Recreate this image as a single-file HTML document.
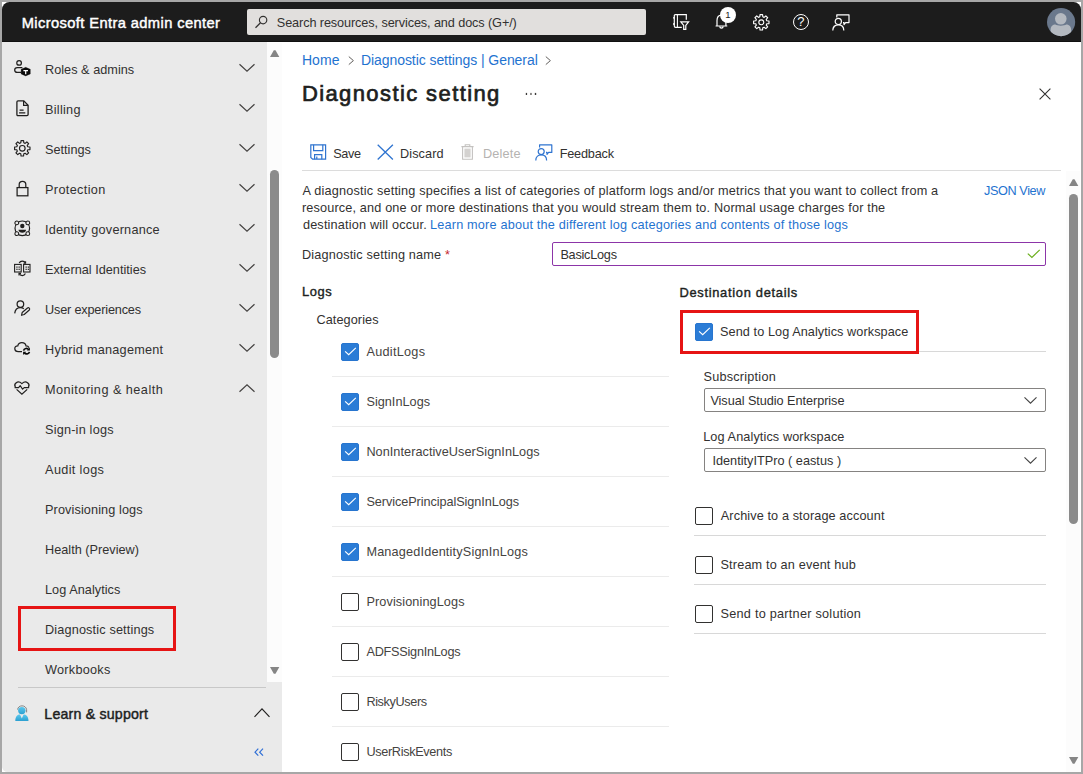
<!DOCTYPE html>
<html lang="en">
<head>
<meta charset="utf-8">
<title>Diagnostic setting - Microsoft Entra admin center</title>
<style>
html,body{margin:0;padding:0}
body{width:1083px;height:774px;overflow:hidden;background:#a7a7a7;font-family:"Liberation Sans",sans-serif;position:relative;color:#323130}
a{text-decoration:none}
ul,li,h1,h2,p{margin:0;padding:0;list-style:none;font-weight:normal;font-size:inherit}
#frame{position:absolute;left:2px;top:2px;width:1079px;height:770px;background:#fff}
#top{position:absolute;left:2px;top:2px;width:1079px;height:40px;box-sizing:border-box;background:#1c1c1c;border-bottom:1px solid #101010;border-radius:7.5px 7.5px 0 0}
#search{position:absolute;left:246.5px;top:9px;width:399.5px;height:26px;background:#e1dfdd;border-radius:2px}
#nav{position:absolute;left:2px;top:42px;width:265px;height:730px;background:#eaeaea;border-radius:0 0 0 6px}
#navfoot{position:absolute;left:2px;top:682px;width:280px;height:90px;background:#eaeaea;border-radius:0 0 0 6px}
#navscroll{position:absolute;left:267px;top:43px;width:15px;height:639px;background:#fcfcfc}
#navsep{position:absolute;left:18px;top:687px;width:248px;height:1px;background:#c8c8c8}
.thumb{position:absolute;background:#8b8b8b;border-radius:4.5px}
.t{position:absolute;white-space:pre;margin:0}
.ic{position:absolute;overflow:visible}
.hl{position:absolute;height:1px;background:#ebebeb}
.red{position:absolute;border:3px solid #e61414;box-sizing:border-box}
.cb{position:absolute;width:18px;height:18px;box-sizing:border-box;border-radius:2px}
.cb.on{background:#2b7cd6;border:1px solid #2775cf}
.cb.off{border:1px solid #323130;background:#fff}
.cb svg{position:absolute;left:-1px;top:-1px}
#name{position:absolute;left:552px;top:242px;width:494px;height:24px;box-sizing:border-box;border:1px solid #8c35a8;border-radius:2px;background:#fff}
.dd{position:absolute;left:704px;width:342px;height:24px;box-sizing:border-box;border:1px solid #858381;border-radius:2px;background:#fff}
#mainscroll{position:absolute;left:1066px;top:171px;width:14px;height:601px;background:#fcfcfc}
</style>
</head>
<body>
<div id="frame"></div>
<header><div id="top"></div>
<div class="t" style="left:21.7px;top:13.0px;font-size:14.7px;line-height:21px;letter-spacing:0.389px;color:#ffffff;-webkit-text-stroke:0.45px #ffffff;">Microsoft Entra admin center</div>
<div id="search"></div><svg class="ic" style="left:255px;top:16px" width="14" height="14" viewBox="0 0 14 14"><circle cx="8.1" cy="4.1" r="3.7" fill="none" stroke="#323130" stroke-width="1.15"/><path d="M5.5 6.8 L0.5 11.8" stroke="#323130" stroke-width="1.25" fill="none"/></svg><div class="t" style="left:276.8px;top:14.0px;font-size:12.7px;line-height:18px;letter-spacing:-0.105px;color:#323130;">Search resources, services, and docs (G+/)</div>
<svg class="ic" style="left:673px;top:13px" width="17" height="18" viewBox="0 0 17 18"><path d="M13.3 6.8 V1.6 H2.6 C1.6 1.6 1.3 2 1.3 3 V13 C1.3 14 1.6 14.4 2.6 14.4 H8.8" fill="none" stroke="#ffffff" stroke-width="1.2"/><path d="M4.4 1.6 V14.4" stroke="#ffffff" stroke-width="1.1"/><path d="M0 4.8 H1.8 M0 11 H1.8" stroke="#ffffff" stroke-width="1.3"/><path d="M7.8 8.8 H15.6 L12.8 12.4 V16.4 H10.7 V12.4 Z" fill="none" stroke="#ffffff" stroke-width="1.2" stroke-linejoin="miter"/></svg><svg class="ic" style="left:714.6px;top:14.2px" width="13" height="15" viewBox="0 0 13 15"><path d="M0.6 12 H12.3 M2 11.8 V6.6 C2 3 4.2 1.2 6.45 1.2 C8.7 1.2 10.9 3 10.9 6.6 V11.8" fill="none" stroke="#ffffff" stroke-width="1.2"/><path d="M4.7 12.4 C4.9 14.6 8 14.6 8.2 12.4" fill="none" stroke="#ffffff" stroke-width="1.2"/></svg><span style="position:absolute;left:720px;top:7px;width:16px;height:16px;border-radius:8px;background:#fff;color:#1b1a19;font-size:9.5px;line-height:15.5px;text-align:center">1</span><svg class="ic" style="left:752.7px;top:13.7px" width="16.6" height="16.6" viewBox="0 0 16.6 16.6"><path d="M13.80 6.80 L15.99 7.02 L15.99 9.58 L13.80 9.80 L13.25 11.12 L14.65 12.84 L12.84 14.65 L11.12 13.25 L9.80 13.80 L9.58 15.99 L7.02 15.99 L6.80 13.80 L5.48 13.25 L3.76 14.65 L1.95 12.84 L3.35 11.12 L2.80 9.80 L0.61 9.58 L0.61 7.02 L2.80 6.80 L3.35 5.48 L1.95 3.76 L3.76 1.95 L5.48 3.35 L6.80 2.80 L7.02 0.61 L9.58 0.61 L9.80 2.80 L11.12 3.35 L12.84 1.95 L14.65 3.76 L13.25 5.48Z" fill="none" stroke="#ffffff" stroke-width="1.15" stroke-linejoin="round"/><circle cx="8.3" cy="8.3" r="2.49" fill="none" stroke="#ffffff" stroke-width="1.15"/></svg><span style="position:absolute;left:792.9px;top:13.9px;width:16.2px;height:16.2px;box-sizing:border-box;border:1.4px solid #fff;border-radius:50%;color:#fff;font-size:13px;line-height:14px;text-align:center">?</span><svg class="ic" style="left:832px;top:13.5px" width="18" height="17" viewBox="0 0 18 17"><circle cx="6.3" cy="7.4" r="3.1" fill="none" stroke="#ffffff" stroke-width="1.2"/><path d="M0.8 16.6 C0.8 12.6 3.4 10.8 6.3 10.8 C9.2 10.8 11.8 12.6 11.8 16.6" fill="none" stroke="#ffffff" stroke-width="1.2"/><path d="M4.8 3.4 V0.8 H17 V8.6 H13.6 L12 10.6 V8.6 H11" fill="none" stroke="#ffffff" stroke-width="1.2" stroke-linejoin="round"/></svg><svg class="ic" style="left:1047px;top:7.8px" width="28.2" height="28.2" viewBox="0 0 28.2 28.2"><defs><clipPath id="avc"><circle cx="14.1" cy="14.1" r="14.1"/></clipPath></defs><circle cx="14.1" cy="14.1" r="14.1" fill="#6a788c"/><g clip-path="url(#avc)" fill="#b4b9c0"><circle cx="13.8" cy="10.8" r="5.8"/><path d="M3.6 30 V22 C3.6 18.4 6 16.6 8.4 16.6 C10 18 17.6 18 19.2 16.6 C21.6 16.6 24.2 18.4 24.2 22 V30 Z"/></g></svg>
</header>
<nav><div id="nav"></div><div id="navscroll"></div><div id="navfoot"></div><div id="navsep"></div>
<ul>
<li><svg class="ic" style="left:14px;top:60px" width="17" height="16" viewBox="0 0 17 16"><circle cx="5.1" cy="2.9" r="2.3" fill="none" stroke="#201f1e" stroke-width="1.25"/><path d="M8.4 7.5 H3.3 C-0.2 7.5 -0.2 12.4 3.3 12.4 H7" fill="none" stroke="#201f1e" stroke-width="1.25"/><path d="M11.7 7.3 L16.3 9.3 V13.9 L11.7 15.9 L7.1 13.9 V9.3 Z" fill="#0b0b0b" stroke="#0b0b0b" stroke-width="0.3" stroke-linejoin="round"/><path d="M9.4 10.5 H14 M11.7 10.5 V14.2" stroke="#fff" stroke-width="1.25"/></svg><svg class="ic" style="left:239px;top:64.3px" width="16" height="8" viewBox="0 0 16 8"><path d="M0.5 0.3 L8.0 7.2 L15.5 0.3" fill="none" stroke="#444241" stroke-width="1.2"/></svg><a class="t" style="left:45.0px;top:61.0px;font-size:12.7px;line-height:18px;letter-spacing:0.023px;color:#323130;">Roles &amp; admins</a></li>
<li><svg class="ic" style="left:15.5px;top:99.6px" width="13" height="16.5" viewBox="0 0 13 16.5"><path d="M0.9 2 C0.9 1.2 1.4 0.8 2 0.8 H7.8 L12.1 5.2 V14.6 C12.1 15.3 11.6 15.7 11 15.7 H2 C1.4 15.7 0.9 15.3 0.9 14.6 Z" fill="none" stroke="#201f1e" stroke-width="1.3"/><path d="M7.6 1 V5.4 H12" fill="none" stroke="#201f1e" stroke-width="1.2"/><path d="M3.6 10.2 H7.6 M3.1 12.8 H9.3" stroke="#201f1e" stroke-width="1.2"/></svg><svg class="ic" style="left:239px;top:104.3px" width="16" height="8" viewBox="0 0 16 8"><path d="M0.5 0.3 L8.0 7.2 L15.5 0.3" fill="none" stroke="#444241" stroke-width="1.2"/></svg><a class="t" style="left:45.0px;top:101.0px;font-size:12.7px;line-height:18px;letter-spacing:0.267px;color:#323130;">Billing</a></li>
<li><svg class="ic" style="left:13.6px;top:139.6px" width="16.6" height="16.6" viewBox="0 0 16.6 16.6"><path d="M13.80 6.80 L15.99 7.02 L15.99 9.58 L13.80 9.80 L13.25 11.12 L14.65 12.84 L12.84 14.65 L11.12 13.25 L9.80 13.80 L9.58 15.99 L7.02 15.99 L6.80 13.80 L5.48 13.25 L3.76 14.65 L1.95 12.84 L3.35 11.12 L2.80 9.80 L0.61 9.58 L0.61 7.02 L2.80 6.80 L3.35 5.48 L1.95 3.76 L3.76 1.95 L5.48 3.35 L6.80 2.80 L7.02 0.61 L9.58 0.61 L9.80 2.80 L11.12 3.35 L12.84 1.95 L14.65 3.76 L13.25 5.48Z" fill="none" stroke="#201f1e" stroke-width="1.15" stroke-linejoin="round"/><circle cx="8.3" cy="8.3" r="2.82" fill="none" stroke="#201f1e" stroke-width="1.15"/></svg><svg class="ic" style="left:239px;top:144.3px" width="16" height="8" viewBox="0 0 16 8"><path d="M0.5 0.3 L8.0 7.2 L15.5 0.3" fill="none" stroke="#444241" stroke-width="1.2"/></svg><a class="t" style="left:45.0px;top:141.0px;font-size:12.7px;line-height:18px;letter-spacing:0.014px;color:#323130;">Settings</a></li>
<li><svg class="ic" style="left:15.5px;top:179.5px" width="13" height="17" viewBox="0 0 13 17"><rect x="1.1" y="7.6" width="10.8" height="8.2" fill="none" stroke="#201f1e" stroke-width="1.25"/><path d="M3.2 7.4 V4.4 C3.2 0.2 9.8 0.2 9.8 4.4 V7.4" fill="none" stroke="#201f1e" stroke-width="1.25"/></svg><svg class="ic" style="left:239px;top:184.3px" width="16" height="8" viewBox="0 0 16 8"><path d="M0.5 0.3 L8.0 7.2 L15.5 0.3" fill="none" stroke="#444241" stroke-width="1.2"/></svg><a class="t" style="left:45.0px;top:181.0px;font-size:12.7px;line-height:18px;letter-spacing:0.356px;color:#323130;">Protection</a></li>
<li><svg class="ic" style="left:13.6px;top:219.6px" width="16.6" height="16.6" viewBox="0 0 16.6 16.6"><circle cx="8.3" cy="8.3" r="7.3" fill="none" stroke="#201f1e" stroke-width="1.2"/><circle cx="8.3" cy="6" r="2.2" fill="#201f1e"/><path d="M4.5 9.7 H12.1 C12.1 13.7 4.5 13.7 4.5 9.7Z" fill="#201f1e"/><circle cx="2.8" cy="2.9" r="1.9" fill="#eaeaea" stroke="#201f1e" stroke-width="1.05"/><circle cx="13.8" cy="2.9" r="1.9" fill="#eaeaea" stroke="#201f1e" stroke-width="1.05"/><circle cx="2.8" cy="13.7" r="1.9" fill="#eaeaea" stroke="#201f1e" stroke-width="1.05"/><circle cx="13.8" cy="13.7" r="1.9" fill="#eaeaea" stroke="#201f1e" stroke-width="1.05"/></svg><svg class="ic" style="left:239px;top:224.3px" width="16" height="8" viewBox="0 0 16 8"><path d="M0.5 0.3 L8.0 7.2 L15.5 0.3" fill="none" stroke="#444241" stroke-width="1.2"/></svg><a class="t" style="left:45.0px;top:221.0px;font-size:12.7px;line-height:18px;letter-spacing:0.211px;color:#323130;">Identity governance</a></li>
<li><svg class="ic" style="left:13.8px;top:259.6px" width="16.6" height="17" viewBox="0 0 16.6 17"><rect x="0.6" y="4.4" width="6.6" height="7.6" fill="none" stroke="#201f1e" stroke-width="1.1"/><rect x="9.6" y="4.4" width="6.4" height="7.6" fill="none" stroke="#201f1e" stroke-width="1.1"/><rect x="2.3" y="6.5" width="1.3" height="1.2" fill="#201f1e"/><rect x="2.3" y="8.7" width="1.3" height="1.2" fill="#201f1e"/><rect x="4.5" y="6.5" width="1.3" height="1.2" fill="#201f1e"/><rect x="4.5" y="8.7" width="1.3" height="1.2" fill="#201f1e"/><rect x="11.5" y="6.5" width="1.3" height="1.2" fill="#201f1e"/><rect x="11.5" y="8.7" width="1.3" height="1.2" fill="#201f1e"/><rect x="13.7" y="6.5" width="1.3" height="1.2" fill="#201f1e"/><rect x="13.7" y="8.7" width="1.3" height="1.2" fill="#201f1e"/><path d="M5.2 3 C6.4 0.4 10.2 0.4 11.4 3 M11.4 13.6 C10.2 16.2 6.4 16.2 5.2 13.6" fill="none" stroke="#201f1e" stroke-width="1.2"/><path d="M9.6 3.2 H11.6 V1.2 M7 13.4 H5 V15.4" fill="none" stroke="#201f1e" stroke-width="1.1"/></svg><svg class="ic" style="left:239px;top:264.3px" width="16" height="8" viewBox="0 0 16 8"><path d="M0.5 0.3 L8.0 7.2 L15.5 0.3" fill="none" stroke="#444241" stroke-width="1.2"/></svg><a class="t" style="left:45.0px;top:261.0px;font-size:12.7px;line-height:18px;letter-spacing:0.011px;color:#323130;">External Identities</a></li>
<li><svg class="ic" style="left:13.8px;top:300px" width="16.5" height="16" viewBox="0 0 16.5 16"><circle cx="6.4" cy="4.1" r="3.3" fill="none" stroke="#201f1e" stroke-width="1.25"/><path d="M0.7 13.4 C1.2 9.4 3.6 7.7 6.4 7.7 C7.8 7.7 9 8.1 9.8 8.8" fill="none" stroke="#201f1e" stroke-width="1.25"/><path d="M7.5 15.3 L8.2 12.5 L13.5 8 C14.7 7.1 16.4 8.8 15.3 10 L10.2 14.5 Z" fill="none" stroke="#201f1e" stroke-width="1.15" stroke-linejoin="round"/></svg><svg class="ic" style="left:239px;top:304.3px" width="16" height="8" viewBox="0 0 16 8"><path d="M0.5 0.3 L8.0 7.2 L15.5 0.3" fill="none" stroke="#444241" stroke-width="1.2"/></svg><a class="t" style="left:45.0px;top:301.0px;font-size:12.7px;line-height:18px;letter-spacing:-0.18px;color:#323130;">User experiences</a></li>
<li><svg class="ic" style="left:14px;top:342.4px" width="16.5" height="12.8" viewBox="0 0 16.5 12.8"><path d="M8 9.6 H4.4 C-0.4 9.6 -0.2 3.6 3.8 3.8 C4.6 -0.2 11.2 -0.4 12 4 C13.4 4 14.6 4.8 15 5.6" fill="none" stroke="#201f1e" stroke-width="1.25"/><path d="M9.6 8.6 C10 6.2 13.4 5.8 14.6 7.6 M15.4 9.8 C15 12.2 11.6 12.6 10.4 10.8" fill="none" stroke="#0b0b0b" stroke-width="1.7"/><path d="M15.9 5.4 V8.6 H12.8 Z M9.1 13 V9.8 H12.2 Z" fill="#0b0b0b"/></svg><svg class="ic" style="left:239px;top:344.3px" width="16" height="8" viewBox="0 0 16 8"><path d="M0.5 0.3 L8.0 7.2 L15.5 0.3" fill="none" stroke="#444241" stroke-width="1.2"/></svg><a class="t" style="left:45.0px;top:341.0px;font-size:12.7px;line-height:18px;letter-spacing:0.244px;color:#323130;">Hybrid management</a></li>
<li><svg class="ic" style="left:14px;top:381px" width="16" height="14" viewBox="0 0 16 14"><path d="M1.4 6 C-0.6 2.8 3.6 -1.2 7.9 2.6 C12.2 -1.2 16.4 2.8 14.4 6" fill="none" stroke="#201f1e" stroke-width="1.25"/><path d="M0.6 6.6 H4.6 L6.2 4.6 L8.6 8.2 L10.2 6.6 H15.2" fill="none" stroke="#201f1e" stroke-width="1.15" stroke-linejoin="round"/><path d="M2.6 8.4 L7.9 13.2 L13.2 8.4" fill="none" stroke="#201f1e" stroke-width="1.25"/></svg><svg class="ic" style="left:239px;top:384.3px" width="16" height="8" viewBox="0 0 16 8"><path d="M0.5 7.7 L8.0 0.8 L15.5 7.7" fill="none" stroke="#444241" stroke-width="1.2"/></svg><a class="t" style="left:45.0px;top:381.0px;font-size:12.7px;line-height:18px;letter-spacing:0.467px;color:#323130;">Monitoring &amp; health</a></li>
<li><a class="t" style="left:45.0px;top:421.0px;font-size:12.7px;line-height:18px;letter-spacing:0.2px;color:#323130;">Sign-in logs</a></li>
<li><a class="t" style="left:45.1px;top:461.0px;font-size:12.7px;line-height:18px;letter-spacing:0.344px;color:#323130;">Audit logs</a></li>
<li><a class="t" style="left:45.0px;top:501.0px;font-size:12.7px;line-height:18px;letter-spacing:0.106px;color:#323130;">Provisioning logs</a></li>
<li><a class="t" style="left:45.0px;top:541.0px;font-size:12.7px;line-height:18px;letter-spacing:0.013px;color:#323130;">Health (Preview)</a></li>
<li><a class="t" style="left:45.0px;top:581.0px;font-size:12.7px;line-height:18px;letter-spacing:0.05px;color:#323130;">Log Analytics</a></li>
<li><a class="t" style="left:45.0px;top:621.0px;font-size:12.7px;line-height:18px;letter-spacing:0.15px;color:#323130;">Diagnostic settings</a></li>
<li><a class="t" style="left:45.1px;top:661.0px;font-size:12.7px;line-height:18px;letter-spacing:0.238px;color:#323130;">Workbooks</a></li>
</ul>
<div class="red" style="left:18px;top:606px;width:158px;height:45px"></div>
<svg class="ic" style="left:14.8px;top:705px" width="14" height="16.2" viewBox="0 0 14 16.2"><defs><linearGradient id="sg" x1="0" y1="0" x2="0" y2="1"><stop offset="0" stop-color="#5cc9ee"/><stop offset="1" stop-color="#2b9fd0"/></linearGradient></defs><path d="M2.6 4.6 C3 -0.4 11 -0.4 11.6 4.6 V7.4" fill="none" stroke="#7a7a7a" stroke-width="0.9"/><circle cx="6.8" cy="5.6" r="3.7" fill="url(#sg)"/><path d="M0.3 16 C0.3 11.4 2.6 9.6 5 9.6 L6.8 13.6 L8.6 9.6 C11 9.6 13.5 11.4 13.5 16 Z" fill="url(#sg)"/></svg><div class="t" style="left:44.3px;top:704.0px;font-size:14.2px;line-height:20px;letter-spacing:0.193px;color:#201f1e;-webkit-text-stroke:0.45px #201f1e;">Learn &amp; support</div><svg class="ic" style="left:254px;top:708.1px" width="16" height="9.2" viewBox="0 0 16 9.2"><path d="M0.5 8.899999999999999 L8.0 0.8 L15.5 8.899999999999999" fill="none" stroke="#201f1e" stroke-width="1.15"/></svg>
<svg class="ic" style="left:253.6px;top:747.8px" width="10" height="8.4" viewBox="0 0 10 8.4"><path d="M4.3 0.7 L1 4.2 L4.3 7.7 M9 0.7 L5.7 4.2 L9 7.7" fill="none" stroke="#2f6fd6" stroke-width="1.2"/></svg>
<svg class="ic" style="left:270px;top:50px" width="9.3" height="7" viewBox="0 0 9.3 7"><polygon points="0,7 9.3,7 5.5,0.2 3.8,0.2" fill="#858585"/></svg><span class="thumb" style="left:270px;top:170px;width:9px;height:188px"></span><svg class="ic" style="left:270px;top:667px" width="9.3" height="7" viewBox="0 0 9.3 7"><polygon points="0,0 9.3,0 5.5,6.8 3.8,6.8" fill="#858585"/></svg>
</nav>
<main>
<div><a class="t" style="left:301.9px;top:50.0px;font-size:14px;line-height:20px;letter-spacing:0.067px;color:#1f73d0;">Home</a><svg class="ic" style="left:347.6px;top:56.0px" width="6.4" height="9.2" viewBox="0 0 6.4 9.2"><path d="M0.8 0.6 L5.4 4.6 L0.8 8.6" fill="none" stroke="#605e5c" stroke-width="1"/></svg><a class="t" style="left:361.0px;top:50.0px;font-size:14px;line-height:20px;letter-spacing:-0.071px;color:#1f73d0;">Diagnostic settings | General</a><svg class="ic" style="left:544.6px;top:56.0px" width="6.4" height="9.2" viewBox="0 0 6.4 9.2"><path d="M0.8 0.6 L5.4 4.6 L0.8 8.6" fill="none" stroke="#605e5c" stroke-width="1"/></svg></div>
<h1 class="t" style="left:301.9px;top:78.0px;font-size:22px;line-height:31px;letter-spacing:1.4px;color:#201f1e;-webkit-text-stroke:0.7px #201f1e;">Diagnostic setting</h1><svg class="ic" style="left:525px;top:92px" width="12" height="4" viewBox="0 0 12 4"><rect x="0.8" y="0.9" width="1.3" height="2.1" fill="#3b3a39"/><rect x="5" y="0.9" width="1.9" height="2.1" fill="#8a8886"/><rect x="9.8" y="0.9" width="1.4" height="2.1" fill="#3b3a39"/></svg><svg class="ic" style="left:1039px;top:88px" width="12" height="12" viewBox="0 0 12 12"><path d="M0.6 0.6 L11.4 11.4 M11.4 0.6 L0.6 11.4" stroke="#323130" stroke-width="1.1"/></svg>
<div><svg class="ic" style="left:309.8px;top:143.8px" width="16.5" height="16" viewBox="0 0 16.5 16"><path d="M0.8 0.8 H15.6 V15.2 H2.6 L0.8 13.4 Z" fill="none" stroke="#2f74d0" stroke-width="1.2"/><path d="M3.6 0.8 V6.6 H12.8 V0.8" fill="none" stroke="#2f74d0" stroke-width="1.2"/><path d="M4.6 15.2 V10.6 H11.8 V15.2 M6.8 12.4 V15" fill="none" stroke="#2f74d0" stroke-width="1.2"/></svg><span class="t" style="left:333.3px;top:145.0px;font-size:12.7px;line-height:18px;letter-spacing:-0.4px;color:#323130;">Save</span><svg class="ic" style="left:376.8px;top:143.8px" width="16.4" height="16.2" viewBox="0 0 16.4 16.2"><path d="M0.7 0.7 L15.9 15.5 M15.9 0.7 L0.7 15.5" stroke="#2f74d0" stroke-width="1.3"/></svg><span class="t" style="left:400.1px;top:145.0px;font-size:12.7px;line-height:18px;letter-spacing:0.067px;color:#323130;">Discard</span><svg class="ic" style="left:460.6px;top:144.4px" width="13" height="16" viewBox="0 0 13 16"><path d="M0.4 2.6 H12.6 M4.2 2.4 V0.8 H8.8 V2.4" fill="none" stroke="#c4c2c0" stroke-width="1.1"/><path d="M1.6 2.8 V15.2 H11.4 V2.8" fill="none" stroke="#c4c2c0" stroke-width="1.1"/><rect x="3.4" y="4.6" width="6.2" height="8.8" fill="#d4d2d0"/></svg><span class="t" style="left:482.9px;top:145.0px;font-size:12.7px;line-height:18px;letter-spacing:0.22px;color:#b5b3b1;">Delete</span><svg class="ic" style="left:535.4px;top:144.2px" width="17.6" height="16.6" viewBox="0 0 17.6 16.6"><circle cx="6.2" cy="7.6" r="3" fill="none" stroke="#2f74d0" stroke-width="1.2"/><path d="M0.8 16.4 C0.8 12.6 3.4 10.8 6.2 10.8 C9 10.8 11.6 12.6 11.6 16.4" fill="none" stroke="#2f74d0" stroke-width="1.2"/><path d="M4.6 3.6 V0.8 H16.8 V8.4 H13.6 L12 10.4 V8.4 H11" fill="none" stroke="#2f74d0" stroke-width="1.2" stroke-linejoin="round"/></svg><span class="t" style="left:559.7px;top:145.0px;font-size:12.7px;line-height:18px;letter-spacing:-0.2px;color:#323130;">Feedback</span></div>
<div class="hl" style="left:302px;top:170px;width:759px;background:#dcdcdc"></div>
<p><span class="t" style="left:302.5px;top:182.0px;font-size:12.7px;line-height:18px;letter-spacing:0.188px;color:#323130;">A diagnostic setting specifies a list of categories of platform logs and/or metrics that you want to collect from a</span><span class="t" style="left:301.9px;top:199.0px;font-size:12.7px;line-height:18px;letter-spacing:0.153px;color:#323130;">resource, and one or more destinations that you would stream them to. Normal usage charges for the</span><span class="t" style="left:302.9px;top:216.0px;font-size:12.7px;line-height:18px;letter-spacing:0.182px;color:#323130;">destination will occur.</span><a class="t" style="left:430.0px;top:216.0px;font-size:12.7px;line-height:18px;letter-spacing:0.185px;color:#1f73d0;">Learn more about the different log categories and contents of those logs</a></p>
<a class="t" style="left:984.0px;top:182.0px;font-size:12.7px;line-height:18px;letter-spacing:-0.4px;color:#1f73d0;">JSON View</a>
<label><span class="t" style="left:301.9px;top:246.0px;font-size:12.7px;line-height:18px;letter-spacing:0.173px;color:#323130;">Diagnostic setting name</span><span class="t" style="left:445.0px;top:246.0px;font-size:12.7px;line-height:18px;letter-spacing:0px;color:#c4262e;">*</span></label><div id="name"></div><span class="t" style="left:560.4px;top:246.0px;font-size:12.7px;line-height:18px;letter-spacing:-0.237px;color:#323130;">BasicLogs</span><svg class="ic" style="left:1027.2px;top:249.2px" width="13.5" height="9.5" viewBox="0 0 13.5 9.5"><path d="M0.8 4.6 L4.9 8.4 L12.7 0.9" fill="none" stroke="#6aae1c" stroke-width="1.2"/></svg>
<section><h2 class="t" style="left:302.0px;top:283.0px;font-size:12.9px;line-height:18px;letter-spacing:0.6px;color:#201f1e;-webkit-text-stroke:0.4px #201f1e;">Logs</h2><div class="t" style="left:316.4px;top:311.0px;font-size:12.7px;line-height:18px;letter-spacing:0.089px;color:#323130;">Categories</div>
<ul>
<li><span class="cb on" style="left:341px;top:343px"><svg width="18" height="18" viewBox="0 0 18 18"><path d="M4.1 8.3 L7.7 11.7 L14.8 4.9" fill="none" stroke="#fff" stroke-width="1.15"/></svg></span><label class="t" style="left:366.5px;top:343.0px;font-size:12.7px;line-height:18px;letter-spacing:0.263px;color:#454341;">AuditLogs</label><div class="hl" style="left:332px;top:376px;width:337px"></div></li>
<li><span class="cb on" style="left:341px;top:393px"><svg width="18" height="18" viewBox="0 0 18 18"><path d="M4.1 8.3 L7.7 11.7 L14.8 4.9" fill="none" stroke="#fff" stroke-width="1.15"/></svg></span><label class="t" style="left:366.4px;top:393.0px;font-size:12.7px;line-height:18px;letter-spacing:0.022px;color:#454341;">SignInLogs</label><div class="hl" style="left:332px;top:426px;width:337px"></div></li>
<li><span class="cb on" style="left:341px;top:443px"><svg width="18" height="18" viewBox="0 0 18 18"><path d="M4.1 8.3 L7.7 11.7 L14.8 4.9" fill="none" stroke="#fff" stroke-width="1.15"/></svg></span><label class="t" style="left:366.4px;top:443.0px;font-size:12.7px;line-height:18px;letter-spacing:0.044px;color:#454341;">NonInteractiveUserSignInLogs</label><div class="hl" style="left:332px;top:476px;width:337px"></div></li>
<li><span class="cb on" style="left:341px;top:493px"><svg width="18" height="18" viewBox="0 0 18 18"><path d="M4.1 8.3 L7.7 11.7 L14.8 4.9" fill="none" stroke="#fff" stroke-width="1.15"/></svg></span><label class="t" style="left:366.4px;top:493.0px;font-size:12.7px;line-height:18px;letter-spacing:-0.072px;color:#454341;">ServicePrincipalSignInLogs</label><div class="hl" style="left:332px;top:526px;width:337px"></div></li>
<li><span class="cb on" style="left:341px;top:543px"><svg width="18" height="18" viewBox="0 0 18 18"><path d="M4.1 8.3 L7.7 11.7 L14.8 4.9" fill="none" stroke="#fff" stroke-width="1.15"/></svg></span><label class="t" style="left:366.4px;top:543.0px;font-size:12.7px;line-height:18px;letter-spacing:0.171px;color:#454341;">ManagedIdentitySignInLogs</label><div class="hl" style="left:332px;top:576px;width:337px"></div></li>
<li><span class="cb off" style="left:341px;top:593px"></span><label class="t" style="left:366.4px;top:593.0px;font-size:12.7px;line-height:18px;letter-spacing:0.1px;color:#454341;">ProvisioningLogs</label><div class="hl" style="left:332px;top:626px;width:337px"></div></li>
<li><span class="cb off" style="left:341px;top:643px"></span><label class="t" style="left:366.5px;top:643.0px;font-size:12.7px;line-height:18px;letter-spacing:-0.254px;color:#454341;">ADFSSignInLogs</label><div class="hl" style="left:332px;top:676px;width:337px"></div></li>
<li><span class="cb off" style="left:341px;top:693px"></span><label class="t" style="left:366.4px;top:693.0px;font-size:12.7px;line-height:18px;letter-spacing:-0.378px;color:#454341;">RiskyUsers</label><div class="hl" style="left:332px;top:726px;width:337px"></div></li>
<li><span class="cb off" style="left:341px;top:743px"></span><label class="t" style="left:366.4px;top:743.0px;font-size:12.7px;line-height:18px;letter-spacing:-0.331px;color:#454341;">UserRiskEvents</label></li>
</ul></section>
<section><h2 class="t" style="left:679.4px;top:284.0px;font-size:12.9px;line-height:18px;letter-spacing:0.694px;color:#201f1e;-webkit-text-stroke:0.4px #201f1e;">Destination details</h2>
<div class="hl" style="left:693px;top:351px;width:353px;background:#d8d8d8"></div><span class="cb on" style="left:695px;top:323px"><svg width="18" height="18" viewBox="0 0 18 18"><path d="M4.1 8.3 L7.7 11.7 L14.8 4.9" fill="none" stroke="#fff" stroke-width="1.15"/></svg></span><label class="t" style="left:720.1px;top:323.0px;font-size:12.7px;line-height:18px;letter-spacing:0.067px;color:#323130;">Send to Log Analytics workspace</label>
<div class="red" style="left:680px;top:310px;width:239px;height:44px"></div>
<label class="t" style="left:703.5px;top:368.0px;font-size:12.7px;line-height:18px;letter-spacing:0.218px;color:#323130;">Subscription</label><div class="dd" style="top:388px"></div><span class="t" style="left:710.4px;top:392.0px;font-size:12.7px;line-height:18px;letter-spacing:-0.048px;color:#323130;">Visual Studio Enterprise</span><svg class="ic" style="left:1024px;top:396.9px" width="13" height="7" viewBox="0 0 13 7"><path d="M0.5 0.3 L6.5 6.2 L12.5 0.3" fill="none" stroke="#444" stroke-width="1.1"/></svg>
<label class="t" style="left:703.2px;top:428.0px;font-size:12.7px;line-height:18px;letter-spacing:0.105px;color:#323130;">Log Analytics workspace</label><div class="dd" style="top:448px"></div><span class="t" style="left:712.4px;top:452.0px;font-size:12.7px;line-height:18px;letter-spacing:0.017px;color:#323130;">IdentityITPro ( eastus )</span><svg class="ic" style="left:1024px;top:456.9px" width="13" height="7" viewBox="0 0 13 7"><path d="M0.5 0.3 L6.5 6.2 L12.5 0.3" fill="none" stroke="#444" stroke-width="1.1"/></svg>
<span class="cb off" style="left:695px;top:507px"></span><label class="t" style="left:720.8px;top:507.0px;font-size:12.7px;line-height:18px;letter-spacing:0.104px;color:#323130;">Archive to a storage account</label><div class="hl" style="left:694px;top:535px;width:352px;background:#d8d8d8"></div>
<span class="cb off" style="left:695px;top:556px"></span><label class="t" style="left:720.5px;top:556.0px;font-size:12.7px;line-height:18px;letter-spacing:0.157px;color:#323130;">Stream to an event hub</label><div class="hl" style="left:694px;top:584px;width:352px;background:#d8d8d8"></div>
<span class="cb off" style="left:695px;top:605px"></span><label class="t" style="left:720.5px;top:605.0px;font-size:12.7px;line-height:18px;letter-spacing:0.248px;color:#323130;">Send to partner solution</label><div class="hl" style="left:694px;top:633px;width:352px;background:#d8d8d8"></div>
</section>
<div id="mainscroll"></div><svg class="ic" style="left:1068.9px;top:179px" width="9.3" height="7" viewBox="0 0 9.3 7"><polygon points="0,7 9.3,7 5.5,0.2 3.8,0.2" fill="#858585"/></svg><span class="thumb" style="left:1069.2px;top:194px;width:8.8px;height:329.6px"></span><svg class="ic" style="left:1068.9px;top:757px" width="9.3" height="7" viewBox="0 0 9.3 7"><polygon points="0,0 9.3,0 5.5,6.8 3.8,6.8" fill="#858585"/></svg>
</main>
</body>
</html>
